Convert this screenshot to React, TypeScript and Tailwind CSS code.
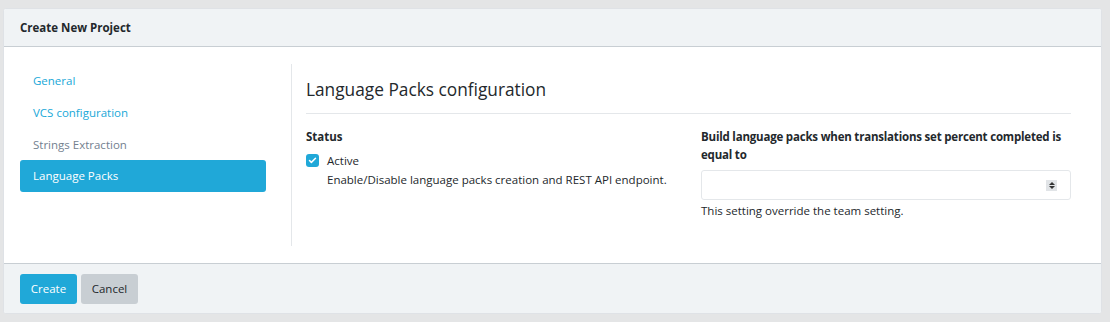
import { Check } from 'lucide-react';

const navItems = [
  { label: 'General', state: 'link' },
  { label: 'VCS configuration', state: 'link' },
  { label: 'Strings Extraction', state: 'muted' },
  { label: 'Language Packs', state: 'active' },
];

export default function App() {
  return (
    <div
      className="w-[1110px] h-[322px] bg-[#e4e5e6] pt-2 pl-[3px] text-[11.5px] text-[#23282c]"
      style={{ fontFamily: '"Open Sans", "Noto Sans", sans-serif' }}
    >
      <div className="w-[1099px] bg-white border border-[#dfe2e6] rounded-[3px] overflow-hidden">
        <div className="h-[38px] bg-[#f0f3f5] border-b border-[#c8ced3] px-4 flex items-center font-bold">
          Create New Project
        </div>

        <div className="h-[216px] flex pt-[18px] pl-4 pr-[30px]">
          <nav className="w-[247px] flex flex-col">
            {navItems.map(item => (
              <div
                key={item.label}
                className={
                  item.state === 'active'
                    ? 'h-[32px] px-[13px] flex items-center rounded-[3px] bg-[#20a8d8] text-white'
                    : item.state === 'muted'
                      ? 'h-[31px] px-[13px] flex items-center text-[#73818f]'
                      : 'h-[32px] px-[13px] flex items-center text-[#20a8d8]'
                }
              >
                {item.label}
              </div>
            ))}
          </nav>

          <div className="ml-[25px] flex-1 h-[182px] -mt-px border-l border-[#e4e7ea] pl-[14px]">
            <h2 className="text-[17.3px] leading-[22px] pt-[15px] pb-[12px] border-b border-[#e4e7ea]">
              Language Packs configuration
            </h2>

            <div className="flex pt-[14px]">
              <div className="w-[395px]">
                <div className="font-bold leading-[18px]">Status</div>
                <div className="flex items-start mt-[6px]">
                  <span className="mt-[2px] w-[13px] h-[13px] rounded-[3px] bg-[#20a8d8] flex items-center justify-center">
                    <Check size={9} strokeWidth={4} className="text-white" />
                  </span>
                  <div className="ml-2 leading-[18px]">
                    <div>Active</div>
                    <div className="mt-px">Enable/Disable language packs creation and REST API endpoint.</div>
                  </div>
                </div>
              </div>

              <div className="w-[370px]">
                <div className="font-bold leading-[18px] tracking-[-0.2px]">
                  Build language packs when translations set percent completed is equal to
                </div>
                <div className="mt-[6px] h-[30px] border border-[#e4e7ea] rounded-[3px] flex items-center justify-end pr-[13px]">
                  <span className="w-[11px] h-[11px] bg-[#e1e4e7] flex flex-col items-center justify-center gap-[1px]">
                    <span className="w-0 h-0 border-l-[3px] border-r-[3px] border-b-[3px] border-l-transparent border-r-transparent border-b-[#333]" />
                    <span className="w-0 h-0 border-l-[3px] border-r-[3px] border-t-[3px] border-l-transparent border-r-transparent border-t-[#333]" />
                  </span>
                </div>
                <div className="mt-[2px] leading-[18px]">This setting override the team setting.</div>
              </div>
            </div>
          </div>
        </div>

        <div className="h-[50px] bg-[#f0f3f5] border-t border-[#c8ced3] px-4 flex items-center gap-[4px]">
          <button className="h-[30px] w-[57px] rounded-[3px] bg-[#20a8d8] text-white">Create</button>
          <button className="h-[30px] w-[57px] rounded-[3px] bg-[#c8ced3] text-[#23282c]">Cancel</button>
        </div>
      </div>
    </div>
  );
}
